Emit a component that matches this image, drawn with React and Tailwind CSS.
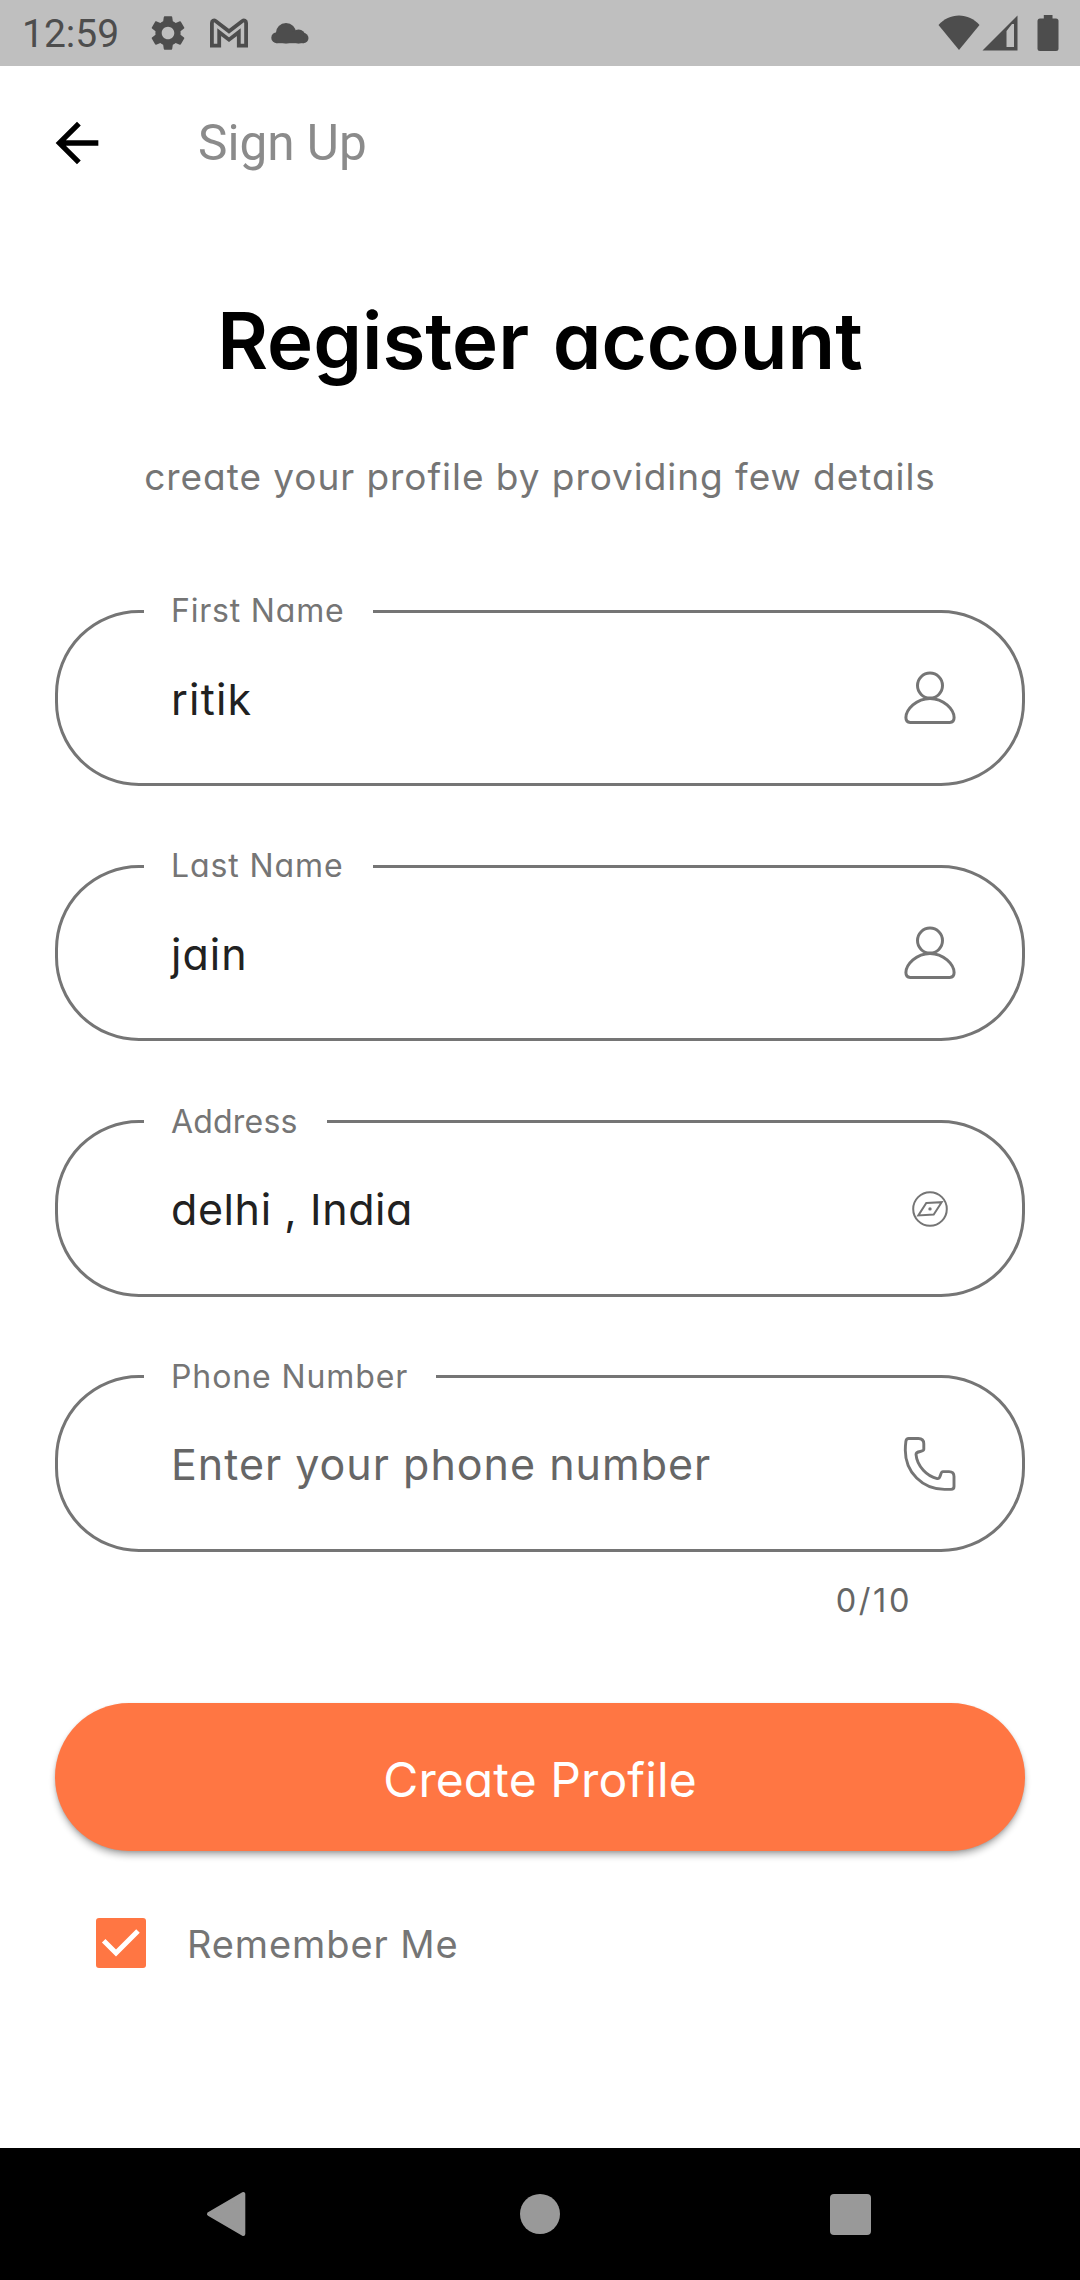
import React from "react";
import { MdSettings } from "react-icons/md";

function StatusBar() {
  return (
    <header className="flex h-[66px] items-center bg-[#bfbfbf] pl-[22px] pr-[21px] text-[#4d4d4d]">
      <span className="w-[125px] pt-[2px] font-['Roboto',sans-serif] text-[39px] leading-none">12:59</span>
      <MdSettings className="h-[42px] w-[42px]" />
      <svg className="ml-[20px] h-[30px] w-[40px]" viewBox="209.5 17.5 40 30" fill="none" stroke="currentColor" strokeWidth="3.8">
        <path d="M212.4 45.2V22.6c0-2.4 2-3.3 3.7-2.1l13.4 10.3 13.4-10.3c1.7-1.2 3.7-.3 3.7 2.1V45.2H239.3V31.7L229.5 39.2 219.7 31.7V45.2Z" />
      </svg>
      <svg className="ml-[22px] h-[22px] w-[38px]" viewBox="271.5 21 38 22" fill="currentColor">
        <circle cx="286.5" cy="32.2" r="10.2" />
        <circle cx="277.3" cy="36.7" r="5.5" />
        <circle cx="299" cy="35.5" r="7" />
        <circle cx="303.9" cy="37.1" r="5.1" />
        <rect x="277" y="32" width="27" height="10.2" />
      </svg>
      <div className="ml-auto flex items-center">
        <svg className="h-[36px] w-[42px]" viewBox="937.5 14.5 42 36" fill="currentColor">
          <path d="M958.5 49.5 938 24.5C943.5 18.5 950.5 15 958.5 15S973.5 18.5 979 24.5Z" />
        </svg>
        <svg className="ml-[2px] h-[36px] w-[36px]" viewBox="981.5 14.5 36 36" fill="currentColor">
          <path fillRule="evenodd" d="M982 50 1017 15V50ZM1006 30.5V46.5H1013.5V23.5H1011.5Z" />
        </svg>
        <svg className="ml-[19px] h-[38px] w-[22px]" viewBox="1036.5 14 22 38" fill="currentColor">
          <rect x="1037" y="18.5" width="21" height="32.5" rx="2.5" />
          <rect x="1043.3" y="15" width="8.7" height="6" />
        </svg>
      </div>
    </header>
  );
}

function UserIcon() {
  return (
    <svg className="h-16 w-16" viewBox="0 0 64 64" fill="none" stroke="#757575" strokeWidth="3">
      <circle cx="32" cy="19.6" r="12.5" />
      <path d="M32 32.4C18.5 32.4 8 43.5 7.9 51.6C7.9 54.7 9.8 56.4 12.2 56.4H51.8C54.200 56.4 56.1 54.7 56.1 51.6C56 43.5 45.5 32.4 32 32.4Z" />
    </svg>
  );
}

function CompassIcon() {
  return (
    <svg className="h-16 w-16" viewBox="0 0 64 64" fill="none" stroke="#757575" strokeWidth="2">
      <circle cx="32" cy="32" r="16.8" />
      <path d="M28.3 26 43.7 25.2 35.7 37.6 20.3 38.5Z" />
      <circle cx="32" cy="31.9" r="1.7" fill="#757575" stroke="none" />
    </svg>
  );
}

function PhoneIcon() {
  return (
    <svg className="h-16 w-16" viewBox="0 0 64 64" fill="none" stroke="#757575" strokeWidth="2.9" strokeLinejoin="round">
      <path d="M10.8 6.5H20.3C23.8 6.5 25.8 8.3 25.8 11.8V17.3C25.8 20.600 18 18.2 18 22.4C19 34.5 29.5 44.5 39.2 46.6C43.6 46.9 41.6 39.6 45 39.6H51C54.3 39.6 56 41.3 56 44.5V54.5C56 56.4 55 57.4 53 57.4H46.5C24.5 57.4 7.3 40.2 7.3 18.2C7.3 15.5 7.5 12.5 7.9 9.2C8.2 7.3 9 6.5 10.8 6.5Z" />
    </svg>
  );
}

function Field({ label, legendClass, value, valueClass, placeholder, icon }) {
  return (
    <fieldset className="h-[195px] min-w-0 rounded-[84px] border-[3px] border-[#757575] pl-[86px] pr-[60px]">
      <legend className={"h-10 whitespace-nowrap pl-[27px] text-[32px] leading-10 text-[#757575] " + legendClass}>{label}</legend>
      <div className="flex h-[134px] items-center justify-between pl-[27px]">
        {value ? (
          <span className={"pt-[2px] text-[43px] leading-none text-[#212121] " + valueClass}>{value}</span>
        ) : (
          <span className="pt-[2px] text-[43px] leading-none tracking-[1px] text-[#666666]">{placeholder}</span>
        )}
        {icon}
      </div>
    </fieldset>
  );
}

export default function App() {
  return (
    <div className="flex h-[2280px] w-[1080px] flex-col overflow-hidden bg-white font-['Inter',sans-serif] [font-feature-settings:'cv11'_1]">
      <StatusBar />
      <nav className="flex h-[154px] items-center pl-[45px] font-['Roboto',sans-serif]">
        <svg className="h-[64px] w-[64px]" viewBox="0 0 24 24" fill="#000">
          <path d="M20 11H7.83l5.590-5.590L12 4l-8 8 8 8 1.410-1.410L7.83 13H20v-2z" />
        </svg>
        <span className="ml-[89px] pt-[2px] text-[49.5px] leading-none text-[#8b8b8b]">Sign Up</span>
      </nav>
      <main className="flex flex-1 flex-col px-[55px]">
        <h1 className="mt-[71px] text-center text-[78px] font-semibold leading-[100px] text-black [word-spacing:4px]">Register account</h1>
        <p className="mt-[66px] text-center text-[37px] leading-[40px] tracking-[0.95px] text-[#757575]">
          create your profile by providing few details
        </p>
        <form className="mt-[94px] flex flex-col">
          <div className="flex flex-col gap-[60.3px]">
            <Field label="First Name" legendClass="w-[229px] tracking-[0.8px]" value="ritik" valueClass="tracking-[1.2px]" icon={<UserIcon />} />
            <Field label="Last Name" legendClass="w-[229px] tracking-[0.9px]" value="jain" valueClass="tracking-[1px]" icon={<UserIcon />} />
            <Field label="Address" legendClass="w-[183px] tracking-[0.2px]" value="delhi , India" valueClass="tracking-[0.6px]" icon={<CompassIcon />} />
            <Field label="Phone Number" legendClass="w-[292px] tracking-[0.9px]" placeholder="Enter your phone number" icon={<PhoneIcon />} />
          </div>
          <span className="mt-[29px] self-end pr-[113px] text-[32.5px] leading-10 tracking-[2.6px] text-[#666666]">0/10</span>
          <button
            type="button"
            className="mt-[82px] h-[148px] rounded-full bg-[#ff7643] pt-[6px] text-[48px] tracking-[0.1px] text-white shadow-[0_5px_7px_-1px_rgba(0,0,0,0.32),0_1px_3px_rgba(0,0,0,0.12)]"
          >
            Create Profile
          </button>
          <label className="mt-[67px] flex h-[50px] items-center pl-[41px]">
            <svg className="h-[50px] w-[50px] rounded-[3px] bg-[#ff7643]" viewBox="0 0 50 50" fill="none" stroke="#fff" strokeWidth="5">
              <path d="M7.7 22.7 20 35 42 13" />
            </svg>
            <span className="ml-[41px] pt-[2px] text-[38px] leading-none tracking-[0.9px] text-[#757575]">Remember Me</span>
          </label>
        </form>
      </main>
      <footer className="flex h-[132px] items-center bg-black text-[#999999]">
        <svg className="ml-[205px] h-[46px] w-[42px]" viewBox="0 0 42 46" fill="currentColor" stroke="currentColor" strokeWidth="4" strokeLinejoin="round">
          <path d="M38.3 3V43L4 23Z" />
        </svg>
        <span className="ml-[273px] h-10 w-10 rounded-full bg-[#999999]" />
        <span className="ml-[270px] h-[41px] w-[41px] rounded-[4px] bg-[#999999]" />
      </footer>
    </div>
  );
}
